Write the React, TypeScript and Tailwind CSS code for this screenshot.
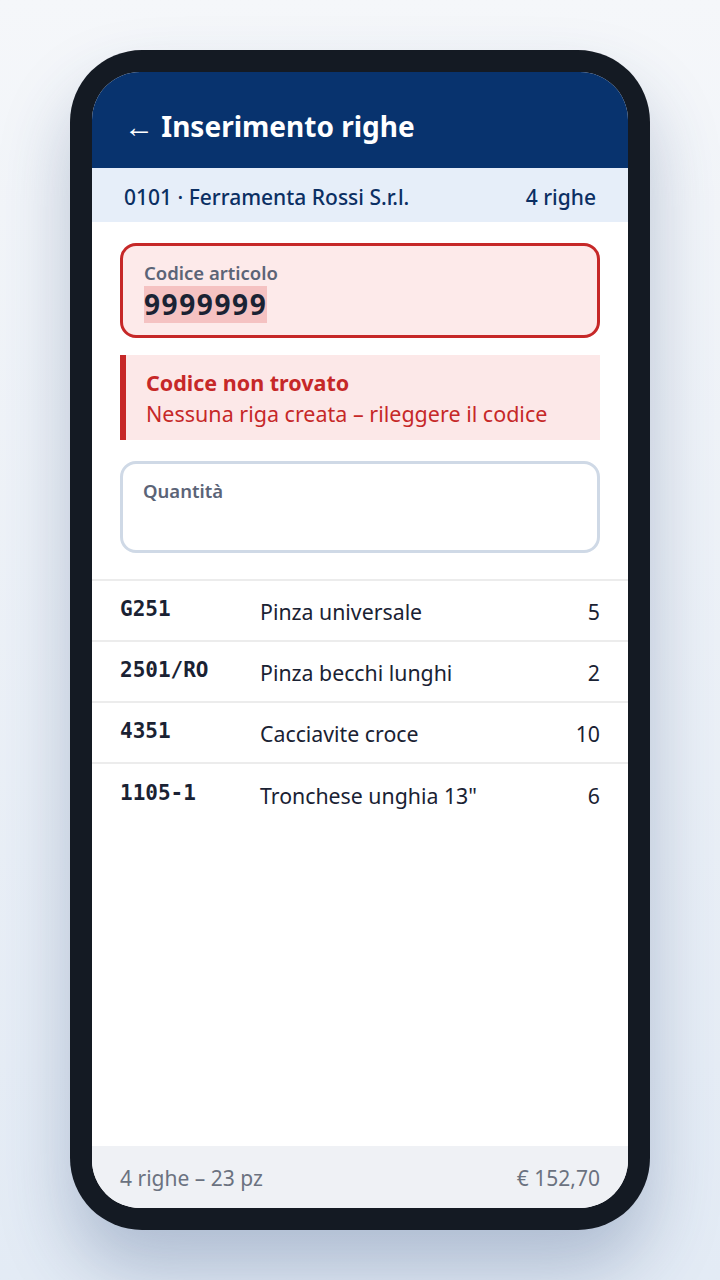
const rows = [
  { code: 'G251', desc: 'Pinza universale', qty: 5 },
  { code: '2501/RO', desc: 'Pinza becchi lunghi', qty: 2 },
  { code: '4351', desc: 'Cacciavite croce', qty: 10 },
  { code: '1105-1', desc: 'Tronchese unghia 13"', qty: 6 },
];

const sans = "font-['Noto_Sans','Open_Sans',sans-serif]";

export default function App() {
  return (
    <div className={`min-h-[1280px] w-[720px] bg-gradient-to-b from-[#f5f7fa] to-[#e3ebf5] pt-[50px] ${sans}`}>
      {/* Phone frame */}
      <div className="mx-auto w-[580px] h-[1180px] rounded-[72px] bg-[#141a23] p-[22px] shadow-[0_40px_70px_rgba(40,70,120,0.28)]">
        <div className="flex h-full flex-col overflow-hidden rounded-[48px] bg-white">
          {/* Header */}
          <div className="flex h-[96px] shrink-0 items-center bg-[#08336e] px-8 pt-[10px]">
            <h1 className="text-[28px] font-bold text-white">
              <span className="text-[30px] font-normal">←</span> Inserimento righe
            </h1>
          </div>

          {/* Customer bar */}
          <div className="flex h-[54px] shrink-0 items-center justify-between bg-[#e6eef9] px-8 pt-[5px] text-[21px] font-medium text-[#0b2f63]">
            <span>0101 · Ferramenta Rossi S.r.l.</span>
            <span>4 righe</span>
          </div>

          {/* Form */}
          <div className="flex flex-col px-7 pt-[21px] pb-[26px]">
            <div className="h-[95px] rounded-2xl border-[3px] border-[#c62828] bg-[#fdeaea] px-[21px] pt-[15px]">
              <div className="text-[18.5px] font-semibold leading-[24px] text-[#5b6477]">Codice articolo</div>
              <span className="mt-[1px] inline-block bg-[#f5c2c2] text-[28px] font-bold leading-[37px] tracking-[1.6px] text-[#1a2233]">
                9999999
              </span>
            </div>

            <div className="mt-[17px] h-[85px] border-l-[6px] border-[#c62828] bg-[#fce8e8] px-5 pt-[13px]">
              <div className="text-[21.5px] font-bold leading-[30px] text-[#c62828]">Codice non trovato</div>
              <div className="text-[21.5px] leading-[32px] text-[#c62828]">Nessuna riga creata – rileggere il codice</div>
            </div>

            <div className="mt-[21px] h-[92px] rounded-2xl border-[3px] border-[#cfd9e6] px-5 pt-[15px]">
              <div className="text-[18.5px] font-semibold leading-[24px] text-[#5b6477]">Quantità</div>
            </div>
          </div>

          {/* Rows */}
          <div className="flex-1 divide-y-2 divide-[#ececec] border-t-2 border-[#ececec]">
            {rows.map((r) => (
              <div key={r.code} className="flex h-[61px] items-center px-7 pt-[2px]">
                <span className="w-[140px] pb-[3px] font-['DejaVu_Sans_Mono',monospace] text-[21px] font-bold text-[#1a2233]">
                  {r.code}
                </span>
                <span className="flex-1 text-[21.3px] text-[#1a2233]">{r.desc}</span>
                <span className="text-[21.3px] text-[#1a2233]">{r.qty}</span>
              </div>
            ))}
          </div>

          {/* Footer */}
          <div className="flex h-[62px] shrink-0 items-center justify-between bg-[#eff1f5] px-7 pt-[4px] text-[21px] text-[#6b7280]">
            <span>4 righe – 23 pz</span>
            <span>€ 152,70</span>
          </div>
        </div>
      </div>
    </div>
  );
}
